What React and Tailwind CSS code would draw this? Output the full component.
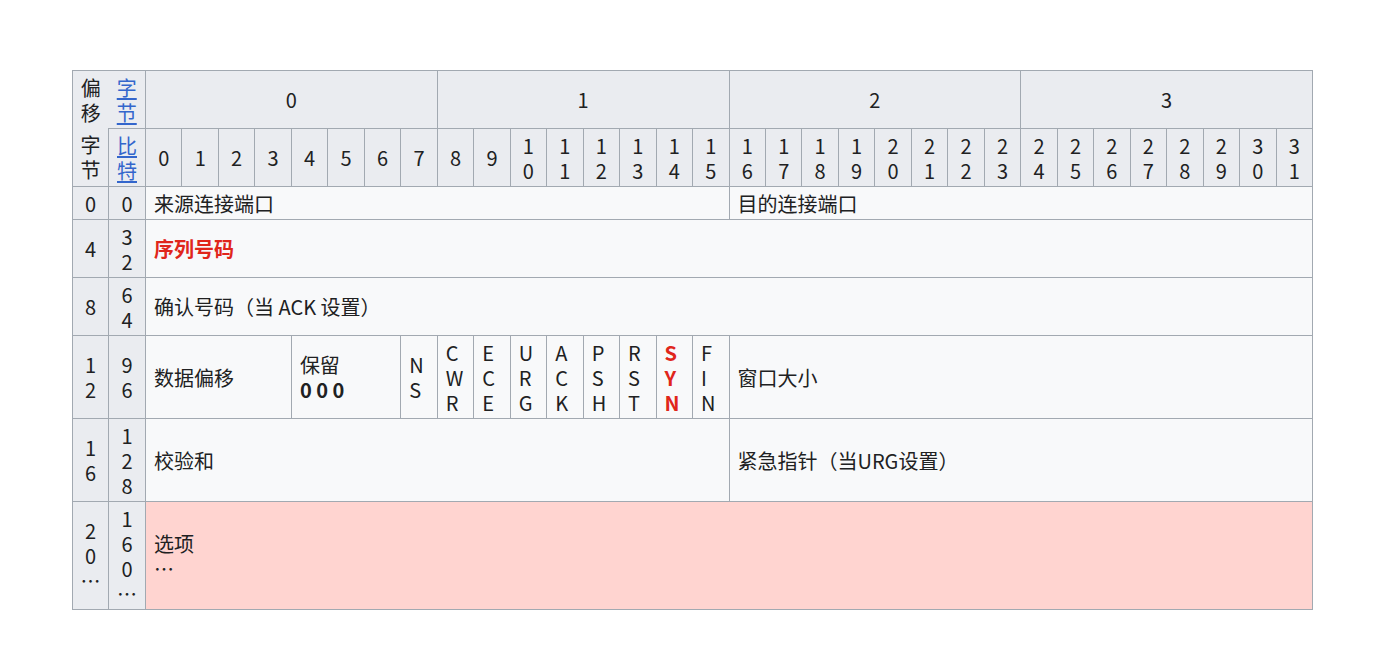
import React from "react";

const bits = Array.from({ length: 32 }, (_, i) => i);

// text broken into one character per line, as in the narrow wiki cells
const Stack = ({ text }) =>
  text.split("").map((c, i) => (
    <span key={i} className="block">
      {c}
    </span>
  ));

const cell = "border border-[#a2a9b1] py-[3.5px] align-middle";
const head = `${cell} bg-[#eaecf0] font-normal text-center px-0`;
const data = `${cell} bg-[#f8f9fa] px-2 text-left`;
const link = "text-[#3366cc] underline underline-offset-2";

const rows = [
  { byte: "0", bit: "0" },
  { byte: "4", bit: "32" },
  { byte: "8", bit: "64" },
  { byte: "12", bit: "96" },
  { byte: "16", bit: "128" },
  { byte: "20…", bit: "160…" },
];

const Label = ({ row }) => (
  <>
    <td className={head}>
      <Stack text={row.byte} />
    </td>
    <td className={head}>
      <Stack text={row.bit} />
    </td>
  </>
);

const flags = ["CWR", "ECE", "URG", "ACK", "PSH", "RST", "SYN", "FIN"];

export default function App() {
  return (
    <div
      className="min-h-screen bg-white pt-[70px] pl-[72px] text-[#202122] text-[20px] leading-[25px]"
      style={{ fontFamily: '"Noto Sans CJK SC", "Noto Sans", sans-serif' }}
    >
      <table className="w-[1241px] table-fixed border-collapse border border-[#a2a9b1]">
        <colgroup>
          <col className="w-[36px]" />
          <col className="w-[37px]" />
          {bits.map((b) => (
            <col key={b} />
          ))}
        </colgroup>
        <thead>
          <tr>
            <th className={`${head} border-r-0 border-b-0`}>
              <Stack text="偏移" />
            </th>
            <th className={`${head} border-l-0`}>
              <span className={`${link} block`}>字</span>
              <span className={`${link} block`}>节</span>
            </th>
            {[0, 1, 2, 3].map((n) => (
              <th key={n} colSpan={8} className={head}>
                {n}
              </th>
            ))}
          </tr>
          <tr>
            <th className={`${head} border-t-0`}>
              <Stack text="字节" />
            </th>
            <th className={head}>
              <span className={`${link} block`}>比</span>
              <span className={`${link} block`}>特</span>
            </th>
            {bits.map((b) => (
              <th key={b} className={head}>
                <Stack text={String(b)} />
              </th>
            ))}
          </tr>
        </thead>
        <tbody>
          <tr>
            <Label row={rows[0]} />
            <td colSpan={16} className={data}>
              来源连接端口
            </td>
            <td colSpan={16} className={data}>
              目的连接端口
            </td>
          </tr>
          <tr>
            <Label row={rows[1]} />
            <td colSpan={32} className={`${data} font-bold text-[#e0261b]`}>
              序列号码
            </td>
          </tr>
          <tr>
            <Label row={rows[2]} />
            <td colSpan={32} className={data}>
              确认号码（当 ACK 设置）
            </td>
          </tr>
          <tr>
            <Label row={rows[3]} />
            <td colSpan={4} className={data}>
              数据偏移
            </td>
            <td colSpan={3} className={data}>
              <span className="block">保留</span>
              <span className="block font-bold">0 0 0</span>
            </td>
            <td className={data}>
              <Stack text="NS" />
            </td>
            {flags.map((f) => (
              <td
                key={f}
                className={`${data} ${f === "SYN" ? "font-bold text-[#e0261b]" : ""}`}
              >
                <Stack text={f} />
              </td>
            ))}
            <td colSpan={16} className={data}>
              窗口大小
            </td>
          </tr>
          <tr>
            <Label row={rows[4]} />
            <td colSpan={16} className={data}>
              校验和
            </td>
            <td colSpan={16} className={data}>
              紧急指针（当URG设置）
            </td>
          </tr>
          <tr>
            <Label row={rows[5]} />
            <td colSpan={32} className={`${data} bg-[#ffd4d0]`}>
              <span className="block">选项</span>
              <span className="block">…</span>
            </td>
          </tr>
        </tbody>
      </table>
    </div>
  );
}
